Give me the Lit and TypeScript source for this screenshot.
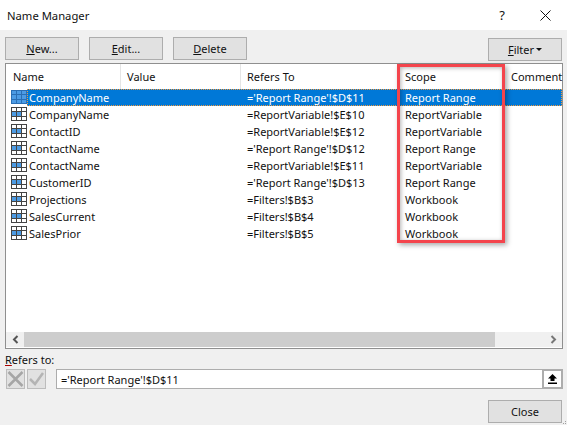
import { html, css, LitElement } from "lit";
import { customElement } from "lit/decorators.js";

const rows = [
  ["CompanyName", "='Report Range'!$D$11", "Report Range"],
  ["CompanyName", "=ReportVariable!$E$10", "ReportVariable"],
  ["ContactID", "=ReportVariable!$E$12", "ReportVariable"],
  ["ContactName", "='Report Range'!$D$12", "Report Range"],
  ["ContactName", "=ReportVariable!$E$11", "ReportVariable"],
  ["CustomerID", "='Report Range'!$D$13", "Report Range"],
  ["Projections", "=Filters!$B$3", "Workbook"],
  ["SalesCurrent", "=Filters!$B$4", "Workbook"],
  ["SalesPrior", "=Filters!$B$5", "Workbook"],
];

const nameIcon = html`<svg class="icon" width="16" height="14" viewBox="0 0 16 14">
  <rect x="0.5" y="0.5" width="15" height="13" fill="#fff" stroke="#444" />
  <rect x="1" y="5" width="9" height="4" fill="#4c9be4" />
  <path d="M5.500 1v12M10.500 1v12M1 4.500h14M1 9.500h14" stroke="#444" fill="none" />
</svg>`;

const selectedIcon = html`<svg class="icon" width="16" height="14" viewBox="0 0 16 14">
  <rect x="0.5" y="0.5" width="15" height="13" fill="#4c9be4" stroke="#2a6fb5" />
  <path d="M5.500 1v12M10.500 1v12M1 4.500h14M1 9.500h14" stroke="#2a6fb5" fill="none" />
</svg>`;

@customElement("app-root")
export class AppRoot extends LitElement {
  static styles = css`
    :host {
      display: block;
      width: 567px;
      height: 425px;
      overflow: hidden;
      background: #f0f0f0;
      font-family: "Noto Sans", sans-serif;
      font-size: 11px;
      color: #111;
    }
    .dialog {
      position: relative;
      display: flex;
      flex-direction: column;
      height: 100%;
    }
    .titlebar {
      display: flex;
      align-items: center;
      height: 30px;
      padding: 0 16px 0 7px;
      background: #fff;
      font-size: 11.250px;
    }
    .title {
      flex: 1;
    }
    .help {
      margin-right: 35px;
      font-size: 13px;
    }
    .toolbar {
      display: flex;
      gap: 10px;
      padding: 7px 5px 0 5px;
      height: 23px;
    }
    .btn {
      box-sizing: border-box;
      display: flex;
      align-items: center;
      justify-content: center;
      width: 74px;
      height: 23px;
      background: #e1e1e1;
      border: 1px solid #adadad;
    }
    .btn u {
      text-underline-offset: 1px;
    }
    .filter {
      margin: 1px 0 0 auto;
      gap: 2px;
    }
    .caret {
      width: 0;
      height: 0;
      border-left: 3px solid transparent;
      border-right: 3px solid transparent;
      border-top: 3px solid #111;
    }
    .list {
      box-sizing: border-box;
      display: flex;
      flex-direction: column;
      width: 558px;
      height: 286px;
      margin: 3px 0 0 5px;
      background: #fff;
      border: 1px solid #8f8f8f;
    }
    .grid {
      flex: 1;
    }
    .head,
    .row {
      display: grid;
      grid-template-columns: 115px 120px 158px 106px 1fr;
    }
    .head {
      height: 25px;
      align-items: center;
    }
    .head span {
      box-sizing: border-box;
      height: 100%;
      display: flex;
      align-items: center;
      padding: 0 0 1px 6px;
      border-right: 1px solid #e5e5e5;
    }
    .head span:first-child {
      padding-left: 7px;
    }
    .head span:nth-child(3),
    .head span:nth-child(4) {
      border-right: 0;
    }
    .head span:last-child {
      border-right: 0;
    }
    .row {
      position: relative;
      height: 17px;
      line-height: 17px;
      white-space: nowrap;
    }
    .row span {
      padding-left: 6px;
    }
    .row .name {
      padding-left: 23px;
    }
    .icon {
      position: absolute;
      left: 5px;
      top: 1px;
    }
    .row.selected {
      color: #fff;
    }
    .row.selected::before {
      content: "";
      position: absolute;
      left: 21px;
      right: 0;
      top: 0;
      bottom: 0;
      background: #0078d7;
      outline: 1px dotted #f39a3d;
      outline-offset: -1px;
    }
    .row.selected span {
      position: relative;
    }
    .scrollbar {
      display: flex;
      align-items: center;
      height: 15px;
      margin-bottom: 1px;
      background: #f0f0f0;
    }
    .arrow {
      display: flex;
      justify-content: center;
      width: 18px;
    }
    .track {
      flex: 1;
      display: flex;
      height: 100%;
    }
    .thumb {
      width: 471px;
      background: #cdcdcd;
    }
    .refers {
      margin: 2px 0 0 5px;
      height: 17px;
      line-height: 17px;
    }
    .refers u {
      text-decoration-color: #a00;
    }
    .entry {
      display: flex;
      align-items: stretch;
      height: 20px;
      margin: 1px 4px 0 6px;
    }
    .tool {
      box-sizing: border-box;
      display: flex;
      align-items: center;
      justify-content: center;
      width: 19px;
      margin-right: 2px;
      background: #e1e1e1;
      border: 1px solid #bcbcbc;
    }
    .input {
      flex: 1;
      display: flex;
      align-items: center;
      box-sizing: border-box;
      margin-left: 8px;
      padding-left: 4px;
      background: #fff;
      border: 1px solid #adadad;
      border-right: 0;
    }
    .collapse {
      box-sizing: border-box;
      display: flex;
      align-items: center;
      justify-content: center;
      width: 21px;
      background: #fff;
      border: 2px solid #adadad;
    }
    .footer {
      display: flex;
      justify-content: flex-end;
      padding: 11px 5px 0 0;
    }
    .highlight {
      position: absolute;
      box-sizing: border-box;
      left: 397px;
      top: 64px;
      width: 108px;
      height: 179px;
      border: 3px solid #f4444c;
      box-shadow: 2px 2px 5px rgba(0, 0, 0, 0.35),
        inset 1px 1px 4px rgba(0, 0, 0, 0.3);
    }
    .grip {
      position: absolute;
      right: 1px;
      bottom: 1px;
    }
  `;

  render() {
    return html`
      <div class="dialog">
        <div class="titlebar">
          <span class="title">Name Manager</span>
          <span class="help">?</span>
          <svg width="11" height="11" viewBox="0 0 11 11">
            <path d="M0.500 0.500l10 10M10.500 0.500l-10 10" stroke="#111" fill="none" />
          </svg>
        </div>
        <div class="toolbar">
          <div class="btn"><span><u>N</u>ew...</span></div>
          <div class="btn"><span><u>E</u>dit...</span></div>
          <div class="btn"><span><u>D</u>elete</span></div>
          <div class="btn filter"><span><u>F</u>ilter</span><i class="caret"></i></div>
        </div>
        <div class="list">
          <div class="grid">
            <div class="head">
              <span>Name</span><span>Value</span><span>Refers To</span><span>Scope</span><span>Comment</span>
            </div>
            ${rows.map(
              (r, i) => html`
                <div class="row ${i === 0 ? "selected" : ""}">
                  <span class="name">${r[0]}</span>
                  <span></span>
                  <span>${r[1]}</span>
                  <span>${r[2]}</span>
                  <span></span>
                  ${i === 0 ? selectedIcon : nameIcon}
                </div>
              `
            )}
          </div>
          <div class="scrollbar">
            <div class="arrow">
              <svg width="7" height="9" viewBox="0 0 7 9"><path d="M5.500 1l-3.500 3.500 3.500 3.500" stroke="#555" stroke-width="2" fill="none" /></svg>
            </div>
            <div class="track"><div class="thumb"></div></div>
            <div class="arrow">
              <svg width="7" height="9" viewBox="0 0 7 9"><path d="M1.500 1l3.500 3.500-3.500 3.500" stroke="#777" stroke-width="2" fill="none" /></svg>
            </div>
          </div>
        </div>
        <div class="refers"><u>R</u>efers to:</div>
        <div class="entry">
          <div class="tool">
            <svg width="17" height="16" viewBox="0 0 17 16"><path d="M1.500 1l14 14M15.500 1l-14 14" stroke="#a6a6a6" stroke-width="2.500" fill="none" /></svg>
          </div>
          <div class="tool">
            <svg width="17" height="16" viewBox="0 0 17 16"><path d="M2 8l5 5 8-11" stroke="#b4b4b4" stroke-width="2.500" fill="none" /></svg>
          </div>
          <div class="input">='Report Range'!$D$11</div>
          <div class="collapse">
            <svg width="9" height="10" viewBox="0 0 9 10"><path d="M4.500 0L9 4.500H6.500V7h-4V4.500H0zM0 8.500h9V10H0z" fill="#000" /></svg>
          </div>
        </div>
        <div class="footer"><div class="btn">Close</div></div>
        <div class="highlight"></div>
        <svg class="grip" width="3" height="3" viewBox="0 0 3 3"><path d="M2 0h1v1H2zM0 2h1v1H0zM2 2h1v1H2z" fill="#a0a0a0" /></svg>
      </div>
    `;
  }
}
